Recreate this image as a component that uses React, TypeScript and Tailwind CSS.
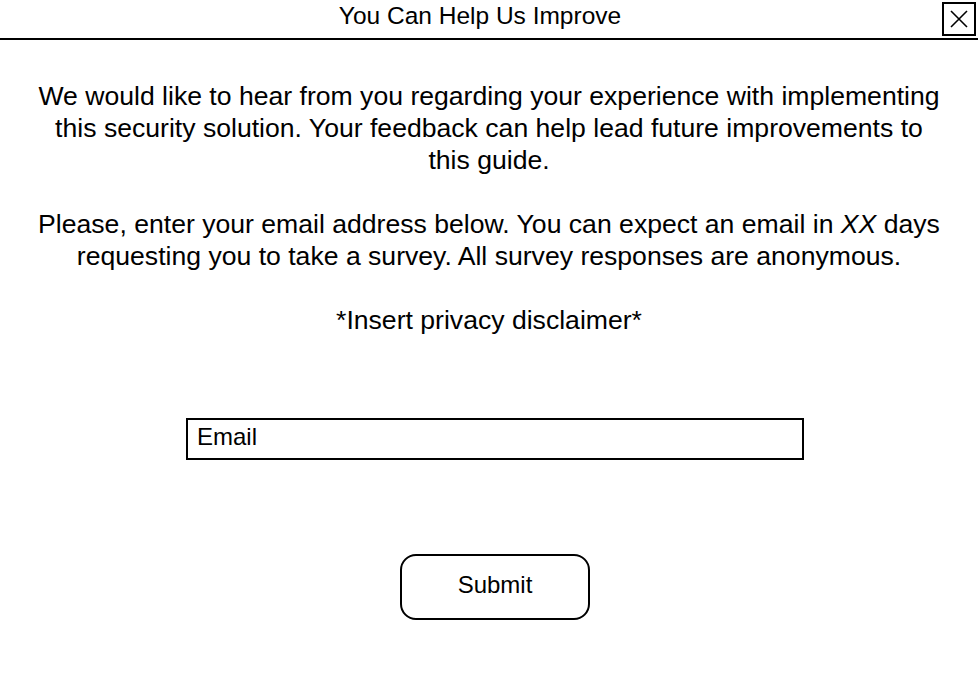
export default function App() {
  return (
    <div className="h-[699px] w-[978px] bg-white text-black" style={{ fontFamily: '"Liberation Sans", Arial, sans-serif' }}>
      <div className="flex h-[40px] items-start border-b-2 border-black">
        <div className="flex-1 pl-[18px] pt-[2px] text-center text-[24.5px] leading-[28px]">You Can Help Us Improve</div>
        <button className="mr-[2px] mt-[2px] flex h-[34px] w-[34px] items-center justify-center border-2 border-black">
          <svg width="20" height="20" viewBox="0 0 20 20" fill="none" stroke="black" strokeWidth="1.6">
            <path d="M2 2L18 18M18 2L2 18" />
          </svg>
        </button>
      </div>

      <div className="flex flex-col items-center pt-[40px] text-[26.6px] leading-[32px]">
        <div className="w-[912px] text-center">
          <p>
            We would like to hear from you regarding your experience with implementing this security solution. Your
            feedback can help lead future improvements to this guide.
          </p>
          <p className="mt-[32px]">
            Please, enter your email address below. You can expect an email in <em>XX</em> days requesting you to take a
            survey. All survey responses are anonymous.
          </p>
          <p className="mt-[32px]">*Insert privacy disclaimer*</p>
        </div>

        <div className="ml-[12px] mt-[82px] h-[42px] w-[618px] border-2 border-black px-[9px] pt-[2px] text-left text-[24px] leading-[30px]">
          Email
        </div>

        <button className="ml-[12px] mt-[94px] flex h-[66px] w-[190px] items-center justify-center rounded-[16px] border-2 border-black pb-[4px] text-[24px]">
          Submit
        </button>
      </div>
    </div>
  );
}
